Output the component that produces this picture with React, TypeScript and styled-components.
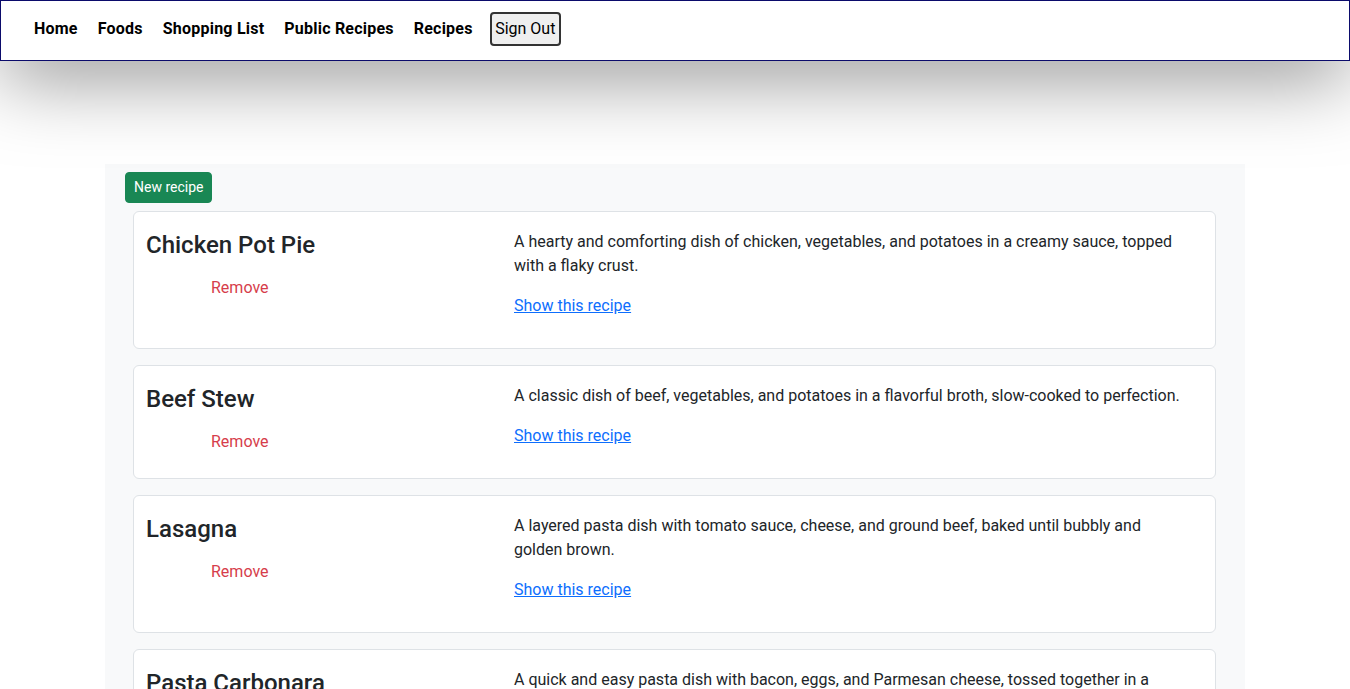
import React from "react";
import styled, { createGlobalStyle } from "styled-components";

const GlobalStyle = createGlobalStyle`
  *, *::before, *::after { box-sizing: border-box; }
  body {
    margin: 0;
    background: #fff;
    color: #212529;
    font-family: Roboto, "Liberation Sans", sans-serif;
    font-size: 16px;
    line-height: 1.5;
  }
`;

const Header = styled.header`
  height: 61px;
  border: 1px solid #0b0b6b;
  background: #fff;
  box-shadow: 0 12px 80px rgba(0, 0, 0, 0.5);
  display: flex;
  align-items: center;
  padding-left: 23px;
  position: relative;
  z-index: 1;
`;

const NavLink = styled.a`
  color: #000;
  font-weight: 700;
  font-size: 16px;
  letter-spacing: 0.22px;
  text-decoration: none;
  padding: 0 10px;
  line-height: 24px;
  margin-top: -4px;
`;

const SignOut = styled.button`
  margin-left: 7px;
  margin-top: -4px;
  height: 34px;
  padding: 0 3.5px;
  font-family: Roboto, "Liberation Sans", sans-serif;
  font-size: 16px;
  color: #000;
  background: #efefef;
  border: 2px solid #333;
  border-radius: 4px;
`;

const Main = styled.main`
  width: 1140px;
  margin: 103px auto 0;
  background: #f8f9fa;
  padding: 8px 29px 0 20px;
`;

const GreenButton = styled.button`
  display: inline-block;
  font-family: Roboto, "Liberation Sans", sans-serif;
  font-size: 14px;
  line-height: 21px;
  padding: 4px 8px;
  color: #fff;
  background: #198754;
  border: 1px solid #198754;
  border-radius: 4px;
  margin-bottom: 8px;
`;

const List = styled.div`
  display: flex;
  flex-direction: column;
  gap: 16px;
  padding-left: 8px;
`;

const Card = styled.article`
  background: #fff;
  border: 1px solid #dee2e6;
  border-radius: 6px;
  padding: 18px 12px 14px;
  display: grid;
  grid-template-columns: 368px 1fr;
`;

const Left = styled.div`
  display: flex;
  flex-direction: column;
  align-items: flex-start;
`;

const Title = styled.h4`
  margin: 1px 0 0;
  font-size: 24px;
  font-weight: 500;
  line-height: 1.2;
`;

const RemoveButton = styled.button`
  margin: 16px 0 0 65px;
  padding: 0;
  border: 0;
  background: none;
  color: #d63d4b;
  font-family: Roboto, "Liberation Sans", sans-serif;
  font-size: 16px;
  line-height: 24px;
`;

const Right = styled.div`
  padding-right: 17px;
`;

const Para = styled.p`
  margin: 0 0 16px;
`;

const ShowLink = styled.a`
  color: #0d6efd;
  text-decoration: underline;
`;

const recipes = [
  {
    name: "Chicken Pot Pie",
    desc: "A hearty and comforting dish of chicken, vegetables, and potatoes in a creamy sauce, topped with a flaky crust.",
  },
  {
    name: "Beef Stew",
    desc: "A classic dish of beef, vegetables, and potatoes in a flavorful broth, slow-cooked to perfection.",
  },
  {
    name: "Lasagna",
    desc: "A layered pasta dish with tomato sauce, cheese, and ground beef, baked until bubbly and golden brown.",
  },
  {
    name: "Pasta Carbonara",
    desc: "A quick and easy pasta dish with bacon, eggs, and Parmesan cheese, tossed together in a creamy sauce.",
  },
];

export default function App() {
  return (
    <>
      <GlobalStyle />
      <Header>
        <NavLink href="#">Home</NavLink>
        <NavLink href="#">Foods</NavLink>
        <NavLink href="#">Shopping List</NavLink>
        <NavLink href="#">Public Recipes</NavLink>
        <NavLink href="#">Recipes</NavLink>
        <SignOut>Sign Out</SignOut>
      </Header>
      <Main>
        <GreenButton>New recipe</GreenButton>
        <List>
          {recipes.map((r) => (
            <Card key={r.name}>
              <Left>
                <Title>{r.name}</Title>
                <RemoveButton>Remove</RemoveButton>
              </Left>
              <Right>
                <Para>{r.desc}</Para>
                <Para>
                  <ShowLink href="#">Show this recipe</ShowLink>
                </Para>
              </Right>
            </Card>
          ))}
        </List>
      </Main>
    </>
  );
}
